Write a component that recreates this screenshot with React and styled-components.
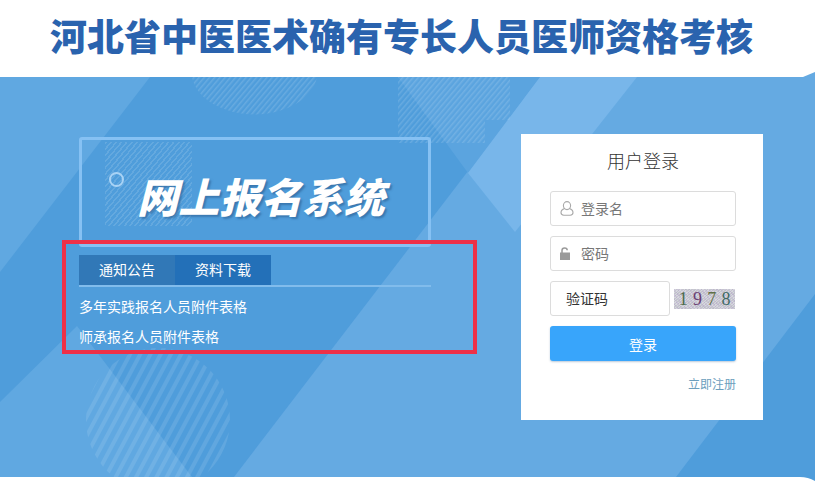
import React from "react";
import styled, { createGlobalStyle } from "styled-components";

const GlobalStyle = createGlobalStyle`
  html, body {
    margin: 0;
    background: #fff;
    overflow: hidden;
  }
  body {
    font-family: "Noto Sans CJK SC", "Liberation Sans", sans-serif;
  }
  * {
    box-sizing: border-box;
  }
`;

const Backdrop = () => (
  <BackdropSvg viewBox="0 0 815 404" width="815" height="404">
    <defs>
      <pattern id="fine" width="4" height="4" patternUnits="userSpaceOnUse" patternTransform="rotate(40)">
        <rect width="1.5" height="4" fill="#ffffff" fillOpacity="0.14" />
      </pattern>
      <pattern id="wide" width="9" height="9" patternUnits="userSpaceOnUse" patternTransform="rotate(28)">
        <rect width="4" height="9" fill="#ffffff" fillOpacity="0.1" />
      </pattern>
    </defs>
    <polygon points="0,0 150,0 0,195" fill="#60a8e1" />
    <polygon points="77,249 192,400 0,400 0,325" fill="#60a8e1" />
    <polygon points="540,0 815,0 815,217 676,400 234,400" fill="#65aae2" />
    <polygon points="398,0 540,0 468,96" fill="#5ba4df" />
    <polygon points="540,0 637,0 515,155 468,96" fill="#78b6ea" />
    <circle cx="158" cy="343" r="72" fill="url(#wide)" />
    <path d="M192 0 A63 43 0 0 0 317 0 Z" fill="url(#fine)" />
    <polygon points="398,0 510,0 510,43 485,43 485,66 398,66" fill="url(#fine)" />
    <polygon points="803,0 815,0 815,-5" fill="#65aae2" />
    <path d="M800 400 Q808 400 815 404 L815 400 Z" fill="#4f9ddb" />
  </BackdropSvg>
);

const UserIcon = () => (
  <svg width="14" height="15" viewBox="0 0 14 15" fill="none" stroke="#a9a9a9" strokeWidth="1.1">
    <ellipse cx="7" cy="4.6" rx="3.6" ry="4" />
    <path d="M4.6 7.6C2.4 8.4 1 9.8 1 11.6c0 1.6 1.2 2.6 2.8 2.6h6.4c1.6 0 2.8-1 2.8-2.6 0-1.8-1.4-3.2-3.6-4" />
  </svg>
);

const LockIcon = () => (
  <svg width="10" height="13" viewBox="0 0 10 13">
    <path d="M2 6V3.5C2 2 3 1 4.6 1S7.2 2 7.2 3.2" fill="none" stroke="#9a9a9a" strokeWidth="1.5" />
    <rect x="0" y="5.5" width="10" height="7.5" fill="#9a9a9a" />
  </svg>
);

const App = () => {
  return (
    <Page>
      <GlobalStyle />
      <Header>
        <Heading>河北省中医医术确有专长人员医师资格考核</Heading>
      </Header>
      <Hero>
        <Backdrop />
        <LeftColumn>
          <Banner>
            <BannerStripes />
            <BannerRing />
            <BannerTitle>网上报名系统</BannerTitle>
          </Banner>
          <Tabs>
            <Tab>通知公告</Tab>
            <Tab $active>资料下载</Tab>
          </Tabs>
          <FileList>
            <li>多年实践报名人员附件表格</li>
            <li>师承报名人员附件表格</li>
          </FileList>
          <Highlight />
        </LeftColumn>
        <LoginCard>
          <CardTitle>用户登录</CardTitle>
          <Field>
            <FieldIcon>
              <UserIcon />
            </FieldIcon>
            <FieldInput placeholder="登录名" />
          </Field>
          <Field>
            <FieldIcon>
              <LockIcon />
            </FieldIcon>
            <FieldInput placeholder="密码" />
          </Field>
          <CaptchaRow>
            <CaptchaField>
              <CaptchaInput placeholder="验证码" />
            </CaptchaField>
            <Captcha>
              <CaptchaDigit $color="#4d6b4d">1</CaptchaDigit>
              <CaptchaDigit $color="#6a3f73">9</CaptchaDigit>
              <CaptchaDigit $color="#5f6f45">7</CaptchaDigit>
              <CaptchaDigit $color="#3f6b66">8</CaptchaDigit>
            </Captcha>
          </CaptchaRow>
          <SubmitButton>登录</SubmitButton>
          <RegisterLink href="#">立即注册</RegisterLink>
        </LoginCard>
      </Hero>
      <Footer />
    </Page>
  );
};

const Page = styled.div`
  width: 815px;
  height: 481px;
  display: flex;
  flex-direction: column;
`;

const Header = styled.header`
  height: 77px;
  background: #fff;
  display: flex;
  justify-content: center;
  padding-right: 12px;
`;

const Heading = styled.h1`
  margin: 0;
  font-size: 37px;
  line-height: 71px;
  font-weight: 900;
  color: #2a63ae;
  white-space: nowrap;
`;

const Hero = styled.main`
  position: relative;
  height: 400px;
  background: #4f9ddb;
  display: flex;
  align-items: flex-start;
`;

const BackdropSvg = styled.svg`
  position: absolute;
  left: 0;
  top: 0;
  overflow: visible;
`;

const LeftColumn = styled.section`
  position: relative;
  width: 352px;
  margin: 60px 0 0 79px;
`;

const Banner = styled.div`
  position: relative;
  height: 110px;
  border: 3px solid #86c1f3;
  border-radius: 3px;
  display: flex;
  align-items: center;
  padding: 5px 0 0 55px;
`;

const BannerStripes = styled.div`
  position: absolute;
  left: 23px;
  top: 2px;
  width: 87px;
  height: 84px;
  background: repeating-linear-gradient(
    130deg,
    rgba(255, 255, 255, 0.12) 0 1.5px,
    transparent 1.5px 4px
  );
`;

const BannerRing = styled.span`
  position: absolute;
  left: 27px;
  top: 32px;
  width: 15px;
  height: 15px;
  border: 2px solid #a9d3f5;
  border-radius: 50%;
`;

const BannerTitle = styled.h2`
  position: relative;
  margin: 0;
  font-size: 41px;
  line-height: 50px;
  font-weight: 900;
  font-style: italic;
  letter-spacing: 0.3px;
  color: #fff;
  white-space: nowrap;
  text-shadow: 2px 2px 2px rgba(40, 90, 140, 0.55);
`;

const Tabs = styled.div`
  position: relative;
  display: flex;
  margin-top: 8px;
  border-bottom: 2px solid #81bcec;
  height: 32px;
`;

const Tab = styled.div`
  width: 96px;
  height: 30px;
  line-height: 28px;
  text-align: center;
  font-size: 14px;
  color: #fff;
  background: ${(p) => (p.$active ? "#2370b8" : "#3178b7")};
`;

const FileList = styled.ul`
  position: relative;
  list-style: none;
  margin: 0;
  padding: 4px 0 0;
  font-size: 14px;
  line-height: 30px;
  color: #fff;
`;

const Highlight = styled.div`
  position: absolute;
  left: -17px;
  top: 103px;
  width: 415px;
  height: 114px;
  border: 4px solid #ee3048;
  pointer-events: none;
`;

const LoginCard = styled.section`
  position: relative;
  width: 242px;
  height: 286px;
  margin: 57px 0 0 90px;
  padding: 0 27px 0 29px;
  background: #fff;
  display: flex;
  flex-direction: column;
`;

const CardTitle = styled.h3`
  margin: 0;
  height: 57px;
  font-size: 18px;
  line-height: 53px;
  font-weight: 300;
  color: #333;
  text-align: center;
`;

const Field = styled.label`
  display: flex;
  align-items: center;
  height: 35px;
  margin-bottom: 10px;
  border: 1px solid #dcdcdc;
  border-radius: 3px;
  background: #fff;
`;

const FieldIcon = styled.span`
  width: 30px;
  padding-left: 9px;
  display: flex;
  align-items: center;
  flex: none;
`;

const FieldInput = styled.input`
  width: 100%;
  min-width: 0;
  border: 0;
  outline: 0;
  padding: 0 0 2px;
  background: transparent;
  font-family: inherit;
  font-size: 14px;
  &::placeholder {
    color: #777;
    opacity: 1;
  }
`;

const CaptchaRow = styled.div`
  display: flex;
  align-items: center;
  gap: 4px;
  height: 35px;
  margin-bottom: 10px;
`;

const CaptchaField = styled(Field)`
  width: 120px;
  margin: 0;
  flex: none;
  padding-left: 15px;
`;

const CaptchaInput = styled(FieldInput)`
  &::placeholder {
    color: #333;
  }
`;

const Captcha = styled.div`
  width: 61px;
  height: 20px;
  display: flex;
  justify-content: space-around;
  align-items: center;
  padding: 0 2px;
  font-family: "Liberation Serif", serif;
  font-size: 18px;
  line-height: 20px;
  background:
    repeating-linear-gradient(50deg, rgba(170, 140, 200, 0.25) 0 1px, transparent 1px 3px),
    repeating-linear-gradient(-40deg, rgba(140, 150, 150, 0.25) 0 1px, transparent 1px 2px),
    #d6d6de;
`;

const CaptchaDigit = styled.span`
  color: ${(p) => p.$color};
`;

const SubmitButton = styled.button`
  height: 35px;
  border: 0;
  border-radius: 3px;
  background: #38a5fb;
  box-shadow: 0 1px 2px rgba(60, 100, 140, 0.35);
  color: #fff;
  font-family: inherit;
  font-size: 14px;
  padding: 0;
`;

const RegisterLink = styled.a`
  align-self: flex-end;
  margin-top: 14px;
  font-size: 12px;
  line-height: 18px;
  color: #6c9ebd;
  text-decoration: none;
`;

const Footer = styled.footer`
  height: 4px;
  background: #fff;
`;

export default App;
